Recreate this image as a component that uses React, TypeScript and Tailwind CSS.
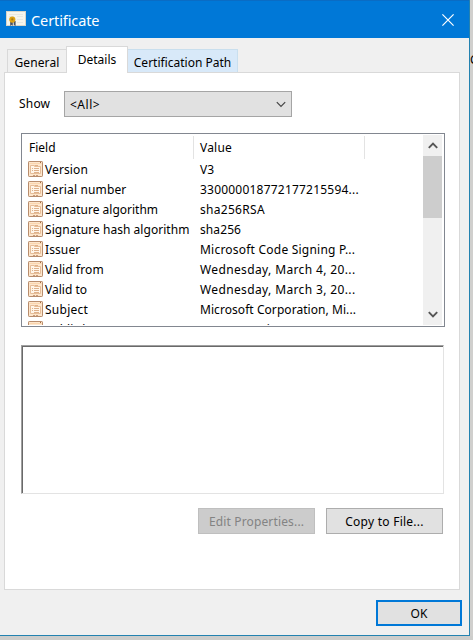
import React from "react";

type Row = { field: string; value: string; fieldClass?: string; valueClass?: string };

const rows: Row[] = [
  { field: "Version", value: "V3", fieldClass: "tracking-[0.1px]" },
  {
    field: "Serial number",
    value: "330000018772177215594...",
    fieldClass: "tracking-[0.15px]",
    valueClass: "tracking-[0.21px]",
  },
  { field: "Signature algorithm", value: "sha256RSA", valueClass: "tracking-[0.3px]" },
  { field: "Signature hash algorithm", value: "sha256", fieldClass: "tracking-[0.04px]", valueClass: "tracking-[0.1px]" },
  { field: "Issuer", value: "Microsoft Code Signing P...", fieldClass: "tracking-[0.1px]", valueClass: "tracking-[0.22px]" },
  { field: "Valid from", value: "Wednesday, March 4, 20...", fieldClass: "tracking-[0.1px]", valueClass: "tracking-[0.37px]" },
  { field: "Valid to", value: "Wednesday, March 3, 20...", valueClass: "tracking-[0.37px]" },
  { field: "Subject", value: "Microsoft Corporation, Mi...", fieldClass: "tracking-[0.25px]", valueClass: "tracking-[0.06px]" },
  { field: "Public key", value: "RSA (2048 Bits)" },
];

function CertificateIcon() {
  return (
    <svg width="20" height="17" viewBox="0 0 20 17" className="block shrink-0">
      <rect x="0.5" y="0.5" width="19" height="14" fill="#f6f5ec" stroke="#d8d5c8" />
      <path d="M3 3.5h14M3 5.5h5M11 5.5h6M11 8.5h6M11 11.5h6" stroke="#e6e8e2" />
      <path d="M4.2 10v5l1.6-1.2 1 1.2V10zM7.5 10l.3 4 1.8 1v-5z" fill="#4a5262" />
      <circle cx="6.3" cy="8.6" r="3.1" fill="#dda314" />
      <circle cx="6.3" cy="8.4" r="1.1" fill="#a97913" />
    </svg>
  );
}

function FieldIcon() {
  return (
    <svg width="15" height="16" viewBox="0 0 15 16" className="block shrink-0">
      <rect x="0.5" y="0.5" width="14" height="15" rx="0.7" fill="#fde6cc" stroke="#b88c6c" />
      <path d="M1.5 2.5h12" stroke="#fad5ae" />
      <path d="M12 1.5h1" stroke="#a06b43" />
      <path d="M2.5 4.5h4v1h6v7h-10z" fill="#fff5e8" stroke="#e6bd98" />
      <path d="M7 4.5h3M4 7.5h1M6 7.5h5M4 9.5h1M6 9.5h5M6 11.5h5" stroke="#deb08a" />
      <path d="M5 14.5h2M8 14.5h2" stroke="#c79c7c" />
    </svg>
  );
}

function Chevron({ up = false, bold = false }: { up?: boolean; bold?: boolean }) {
  return (
    <svg width="10" height="7" viewBox="0 0 10 7" className="block shrink-0" fill="none">
      <path
        d={up ? "M.8 5.8 5 1.5l4.2 4.3" : "M.8 1.2 5 5.5l4.2-4.3"}
        stroke={bold ? "#555" : "#444"}
        strokeWidth={bold ? 1.9 : 1.2}
      />
    </svg>
  );
}

export default function App() {
  return (
    <div className="flex h-[640px] w-[473px] flex-col overflow-hidden bg-[#cdcdcb] font-['Noto_Sans','Open_Sans',sans-serif] text-[12px] leading-5 text-black">
      <div className="flex h-[636px]">
        <main className="flex w-[470px] flex-col border-r border-b border-[#2382b0] bg-[#f0f0f0]">
          <header className="flex h-[38px] shrink-0 items-center border-t border-[#0a6cc4] bg-[#0078d7] pr-[15px] pl-[6px]">
            <CertificateIcon />
            <h1 className="ml-[5px] text-[14.5px] tracking-[-0.1px] text-white">Certificate</h1>
            <svg width="12" height="12" viewBox="0 0 12 12" className="ml-auto block">
              <path d="m.4.4 11.2 11.2M11.6.4.4 11.6" stroke="#fff" strokeWidth="1.2" />
            </svg>
          </header>
          <nav className="flex h-[35px] shrink-0 items-end pl-[7px]">
            <div className="flex h-[24px] w-[59px] items-center justify-center border border-r-0 border-[#d9d9d9] pt-[3px] tracking-[0.1px]">
              General
            </div>
            <div className="relative z-10 flex h-[27px] w-[62px] items-center justify-center border border-b-0 border-[#d9d9d9] bg-white">
              Details
            </div>
            <div className="flex h-[24px] w-[110px] items-center justify-center border border-l-0 border-[#c9dfee] border-b-[#d9d9d9] bg-[#d8e9f9] pt-[3px]">
              Certification Path
            </div>
          </nav>
          <section className="-mt-px ml-[4px] flex h-[518px] w-[456px] shrink-0 flex-col border border-[#d9d9d9] bg-white pl-[16px]">
            <div className="mt-[18px] flex h-[26px] items-center">
              <span className="-ml-[2px] w-[45px] tracking-[0.2px]">Show</span>
              <div className="flex h-[26px] w-[228px] items-center justify-between border border-[#a5a5a5] bg-[#e1e1e1] pr-[5px] pl-[5px]">
                <span className="pt-px tracking-[0.5px]">&lt;All&gt;</span>
                <Chevron />
              </div>
            </div>
            <div className="mt-[16px] flex h-[194px] w-[424px] shrink-0 border border-[#828790] py-px pr-[2px]">
              <div className="flex min-w-0 flex-1 flex-col overflow-hidden">
                <div className="flex h-[24px] shrink-0 pt-px">
                  <div className="w-[172px] border-r border-[#e3e3e3] pl-[7px] leading-[23px]">Field</div>
                  <div className="w-[171px] border-r border-[#e3e3e3] pl-[6px] leading-[23px] tracking-[0.2px]">Value</div>
                </div>
                <div className="flex flex-col">
                  {rows.map((row) => (
                    <div key={row.field} className="flex h-[20px] shrink-0 items-center pl-[6px] whitespace-nowrap">
                      <FieldIcon />
                      <span className={`ml-[2px] w-[155px] pt-[2px] ${row.fieldClass ?? ""}`}>{row.field}</span>
                      <span className={`pt-[2px] ${row.valueClass ?? ""}`}>{row.value}</span>
                    </div>
                  ))}
                </div>
              </div>
              <div className="flex w-[19px] shrink-0 flex-col items-center justify-between bg-[#f0f0f0]">
                <div className="flex h-[21px] items-center">
                  <Chevron up bold />
                </div>
                <div className="h-[62px] w-full bg-[#cdcdcd]" />
                <div className="flex-1" />
                <div className="flex h-[21px] items-center">
                  <Chevron bold />
                </div>
              </div>
            </div>
            <div className="mt-[18px] h-[149px] w-[423px] shrink-0 border border-[#e3e3e3] border-t-[#a0a0a0] border-l-[#a0a0a0]">
              <div className="h-full w-full border-t border-l border-[#696969]" />
            </div>
            <div className="mt-[14px] ml-[177px] flex gap-[11px]">
              <button className="h-[26px] w-[117px] border border-[#bfbfbf] bg-[#cccccc] pt-px tracking-[0.15px] text-[#838383]">
                Edit Properties...
              </button>
              <button className="h-[26px] w-[117px] border border-[#adadad] bg-[#e1e1e1] pt-px tracking-[0.25px]">
                Copy to File...
              </button>
            </div>
          </section>
          <footer className="mt-[10px] flex justify-end pr-[7px]">
            <button className="h-[26px] w-[86px] border-2 border-[#0078d7] bg-[#e1e1e1] pt-px">OK</button>
          </footer>
        </main>
        <aside className="flex w-[3px] overflow-hidden bg-[#d0cfcd] pt-[50px]">
          <span className="shrink-0">G</span>
        </aside>
      </div>
    </div>
  );
}
